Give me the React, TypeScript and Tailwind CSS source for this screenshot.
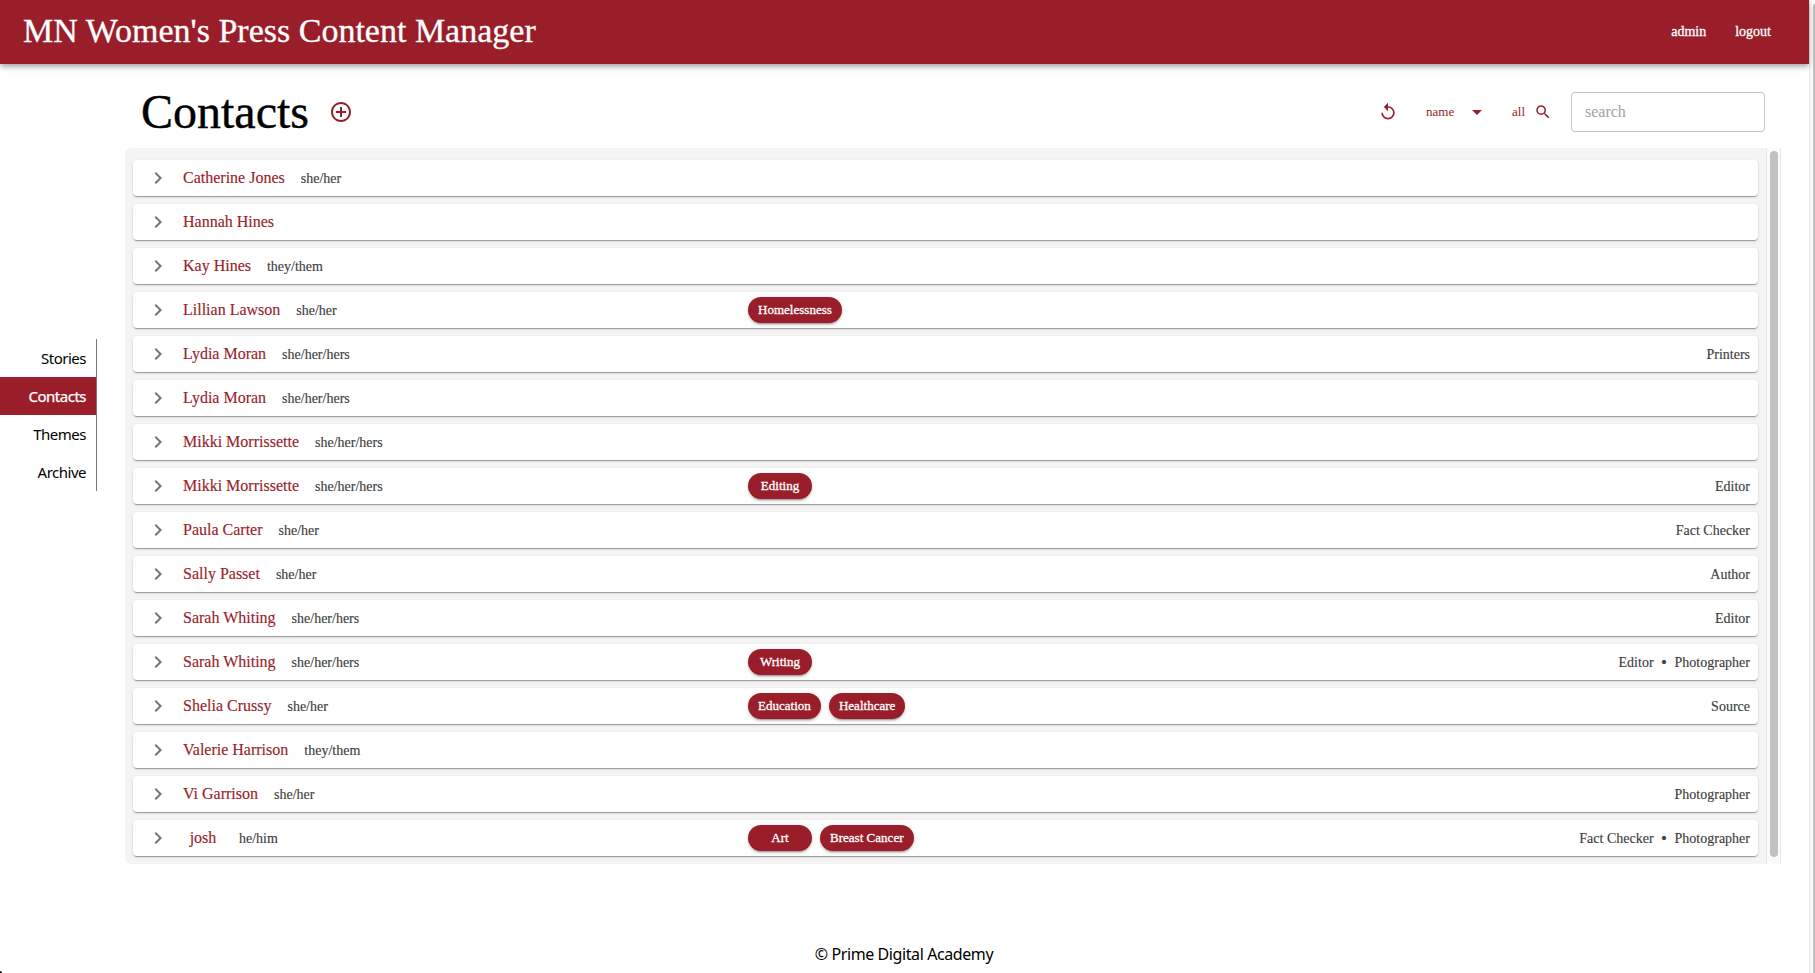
import React from "react";
import {
  MdAddCircleOutline,
  MdArrowDropDown,
  MdChevronRight,
  MdReplay,
  MdSearch,
} from "react-icons/md";

type Contact = {
  name: string;
  pronouns?: string;
  topics?: string[];
  roles?: string[];
};

const contacts: Contact[] = [
  { name: "Catherine Jones", pronouns: "she/her" },
  { name: "Hannah Hines" },
  { name: "Kay Hines", pronouns: "they/them" },
  { name: "Lillian Lawson", pronouns: "she/her", topics: ["Homelessness"] },
  { name: "Lydia Moran", pronouns: "she/her/hers", roles: ["Printers"] },
  { name: "Lydia Moran", pronouns: "she/her/hers" },
  { name: "Mikki Morrissette", pronouns: "she/her/hers" },
  { name: "Mikki Morrissette", pronouns: "she/her/hers", topics: ["Editing"], roles: ["Editor"] },
  { name: "Paula Carter", pronouns: "she/her", roles: ["Fact Checker"] },
  { name: "Sally Passet", pronouns: "she/her", roles: ["Author"] },
  { name: "Sarah Whiting", pronouns: "she/her/hers", roles: ["Editor"] },
  { name: "Sarah Whiting", pronouns: "she/her/hers", topics: ["Writing"], roles: ["Editor", "Photographer"] },
  { name: "Shelia Crussy", pronouns: "she/her", topics: ["Education", "Healthcare"], roles: ["Source"] },
  { name: "Valerie Harrison", pronouns: "they/them" },
  { name: "Vi Garrison", pronouns: "she/her", roles: ["Photographer"] },
  { name: "josh", pronouns: "he/him", topics: ["Art", "Breast Cancer"], roles: ["Fact Checker", "Photographer"] },
];

const navItems = ["Stories", "Contacts", "Themes", "Archive"];

function Header() {
  return (
    <header className="z-10 flex h-16 shrink-0 items-center justify-between bg-[#991e2a] pr-[38px] pl-[23px] text-white shadow-[0_2px_4px_-1px_rgba(0,0,0,0.2),0_4px_5px_0_rgba(0,0,0,0.14),0_1px_10px_0_rgba(0,0,0,0.12)]">
      <h1 className="pb-0.5 text-[34px] leading-[40px] whitespace-nowrap [-webkit-text-stroke:0.3px_white]">
        MN Women's Press Content Manager
      </h1>
      <div className="flex gap-[29px] text-[14px] leading-6 [-webkit-text-stroke:0.3px_white]">
        <button>admin</button>
        <button>logout</button>
      </div>
    </header>
  );
}

function SideNav() {
  return (
    <nav className="mt-[275px] flex h-[152px] w-[97px] shrink-0 flex-col border-r border-[#777] font-['Noto_Sans',sans-serif] text-[15px] tracking-[-0.5px]">
      {navItems.map((item) => (
        <a
          key={item}
          className={
            item === "Contacts"
              ? "flex h-[38px] items-center justify-end bg-[#991e2a] pr-[10px] text-white [-webkit-text-stroke:0.25px_white]"
              : "flex h-[38px] items-center justify-end pr-[10px] text-black"
          }
        >
          {item}
        </a>
      ))}
    </nav>
  );
}

function Toolbar() {
  return (
    <div className="flex h-[84px] items-center pt-3 pr-4 pl-4 text-[#991e2a]">
      <h2 className="w-[188px] text-[48px] leading-[56px] text-black [-webkit-text-stroke:0.4px_black]">Contacts</h2>
      <MdAddCircleOutline size={24} />
      <div className="ml-auto flex items-center text-[13px]">
        <MdReplay size={20} />
        <span className="ml-7 w-[39px]">name</span>
        <MdArrowDropDown size={24} />
        <span className="ml-[23px] w-[22px]">all</span>
        <MdSearch size={18} />
        <input
          placeholder="search"
          className="ml-[19px] h-10 w-[194px] rounded-[4px] border border-[#c4c4c4] px-[13px] text-[16px] outline-none placeholder:text-[#a2a2a2]"
        />
      </div>
    </div>
  );
}

function ContactRow({ contact }: { contact: Contact }) {
  return (
    <li className="flex h-9 items-center rounded-[4px] bg-white pr-2 pl-[13px] shadow-[0_2px_1px_-1px_rgba(0,0,0,0.2),0_1px_1px_0_rgba(0,0,0,0.14),0_1px_3px_0_rgba(0,0,0,0.12)]">
      <MdChevronRight size={24} className="shrink-0 text-[#757575]" />
      <div className="ml-[13px] flex w-[565px] shrink-0 items-center gap-4">
        <span className="min-w-10 text-center text-[16px] text-[#991e2a] [-webkit-text-stroke:0.15px_#991e2a]">
          {contact.name}
        </span>
        <span className="pt-px text-[14px] text-[#404040] [-webkit-text-stroke:0.15px_#404040]">{contact.pronouns}</span>
      </div>
      <div className="flex gap-2">
        {contact.topics?.map((topic) => (
          <span
            key={topic}
            className="flex h-[26px] min-w-16 items-center justify-center rounded-full bg-[#991e2a] px-[10px] text-[13px] tracking-[0.02px] whitespace-nowrap text-white shadow-[0_3px_1px_-2px_rgba(0,0,0,0.2),0_2px_2px_0_rgba(0,0,0,0.14),0_1px_5px_0_rgba(0,0,0,0.12)] [-webkit-text-stroke:0.3px_white]"
          >
            {topic}
          </span>
        ))}
      </div>
      <div className="ml-auto flex items-center pt-px text-[14px] text-[#404040] [-webkit-text-stroke:0.15px_#404040]">
        {contact.roles?.map((role, i) => (
          <React.Fragment key={role}>
            {i > 0 && <span className="w-[21px] text-center text-[17px] leading-4">•</span>}
            <span>{role}</span>
          </React.Fragment>
        ))}
      </div>
    </li>
  );
}

function ContactList() {
  return (
    <div className="flex h-[716px]">
      <ul className="flex flex-1 flex-col gap-2 rounded-l-[6px] bg-[#f4f4f4] px-2 pt-3">
        {contacts.map((contact, i) => (
          <ContactRow key={i} contact={contact} />
        ))}
      </ul>
      <div className="w-[15px] border-x border-[#e8e8e8] bg-[#fafafa] px-[3px] pt-[3px]">
        <div className="h-[706px] w-2 rounded-full bg-[#c1c1c1]" />
      </div>
    </div>
  );
}

export default function App() {
  return (
    <div className="relative flex h-[973px] w-[1815px] overflow-hidden bg-white font-['Liberation_Serif',serif]">
      <div className="flex w-[1809px] flex-col">
        <Header />
        <div className="flex flex-1">
          <SideNav />
          <main className="ml-7 w-[1656px]">
            <Toolbar />
            <ContactList />
          </main>
        </div>
        <footer className="flex h-[37px] items-start justify-center pr-px font-['Noto_Sans',sans-serif] text-[16px] leading-[37px] tracking-[-0.41px]">
          © Prime Digital Academy
        </footer>
      </div>
      <div className="flex w-1.5 justify-end border-l border-[#e8e8e8] bg-[#fafafa] pt-1">
        <div className="w-0.5 rounded-tl-full bg-[#c1c1c1]" />
      </div>
      <div className="absolute bottom-0 left-0 h-0.5 w-0.5 rounded-tr-full bg-black" />
    </div>
  );
}
